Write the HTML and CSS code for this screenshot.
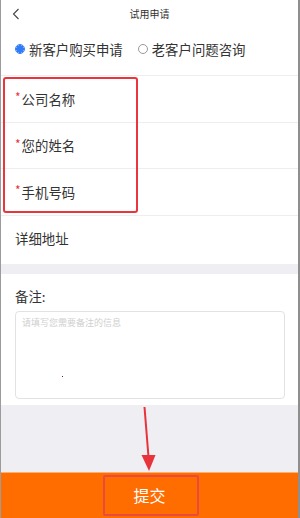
FILE: index.html
```html
<!DOCTYPE html>
<html lang="zh">
<head>
<meta charset="utf-8">
<link rel="stylesheet" href="styles.css">
</head>
<body>
<div class="phone">
  <header class="header">
    <svg class="back" width="8" height="12" viewBox="0 0 8 12"><path d="M6.5 1 L1.5 6 L6.5 11" fill="none" stroke="#444" stroke-width="1.1"/></svg>
    <div class="title">试用申请</div>
    <span></span>
  </header>
  <div class="radios">
    <label class="radio"><span class="dot on"></span>新客户购买申请</label>
    <label class="radio"><span class="dot"></span>老客户问题咨询</label>
  </div>
  <div class="rows">
    <div class="row"><span class="req">*</span>公司名称</div>
    <div class="row"><span class="req">*</span>您的姓名</div>
    <div class="row"><span class="req">*</span>手机号码</div>
    <div class="row">详细地址</div>
  </div>
  <div class="band"></div>
  <div class="note">
    <div class="note-label">备注:</div>
    <div class="area"><span class="ph">请填写您需要备注的信息</span><span class="speck"></span></div>
  </div>
  <div class="gray"></div>
  <div class="submit">提交</div>

  <div class="mark-labels"></div>
  <div class="mark-submit"></div>
  <svg class="arrow" width="20" height="66" viewBox="0 0 20 66"><path d="M4.5 0 L8.5 50" stroke="#e8333a" stroke-width="2" fill="none"/><path d="M1.5 48 L15.5 48 L9 64 Z" fill="#e8333a"/></svg>
</div>
</body>
</html>
```
FILE: styles.css
```css
* { box-sizing: border-box; margin: 0; padding: 0; }
body { width: 300px; height: 518px; overflow: hidden; background: #fff; font-family: "Noto Sans CJK SC", "Noto Sans", sans-serif; color: #333; }
.phone { position: relative; width: 300px; height: 518px; display: flex; flex-direction: column; border-left: 1px solid #9c9c9c; border-right: 2px solid #8e8e8e; background: #fff; }
.header { height: 30px; display: grid; grid-template-columns: 30px 1fr 30px; align-items: center; }
.back { margin-left: 11px; margin-top: -2px; }
.title { text-align: center; font-size: 10px; color: #333; margin-top: -3px; }
.radios { height: 45px; display: flex; align-items: center; padding-left: 14px; gap: 15px; font-size: 13.4px; color: #333; padding-bottom: 8px; }
.radio { display: flex; align-items: center; gap: 4px; }
.dot { width: 10px; height: 10px; border-radius: 50%; border: 1px solid #999; display: inline-block; }
.dot.on { border: 1px solid #2f7cf6; background: radial-gradient(circle, #2f7cf6 0 3.6px, #fff 4px); }
.rows { border-top: 1px solid #eeeeee; }
.row { height: 46.5px; border-bottom: 1px solid #eeeeee; display: flex; align-items: center; padding-left: 14px; font-size: 13.4px; color: #333; }
.row:last-child { height: 48.5px; border-bottom: none; padding-bottom: 4px; }
.req { color: #e8333a; font-size: 12px; align-self: center; margin-top: -4px; margin-right: 1px; }
.band { height: 10px; background: #eeeef3; }
.note { padding: 13px 13px 6px 14px; }
.note-label { font-size: 13.4px; color: #333; line-height: 18px; }
.area { position: relative; margin-top: 6px; height: 88px; border: 1px solid #e2e2e2; border-radius: 4px; padding: 5px 6px; font-size: 9px; line-height: 12px; }
.ph { color: #cfcfcf; }
.speck { position: absolute; left: 46px; top: 64px; width: 1px; height: 1px; background: #6a2020; }
.gray { flex: 1; background: #eeeef3; }
.submit { height: 46px; background: #ff6c00; border-top: 1px solid #ffb070; color: #fff; font-size: 16px; display: flex; align-items: center; justify-content: center; padding-bottom: 2px; }
.mark-labels { position: absolute; left: 2px; top: 77px; width: 135px; height: 136px; border: 2px solid #e8363c; border-radius: 3px; }
.mark-submit { position: absolute; left: 102px; top: 475px; width: 96px; height: 41px; border: 2px solid #e84a3c; border-radius: 2px; }
.arrow { position: absolute; left: 139px; top: 407px; }
```
